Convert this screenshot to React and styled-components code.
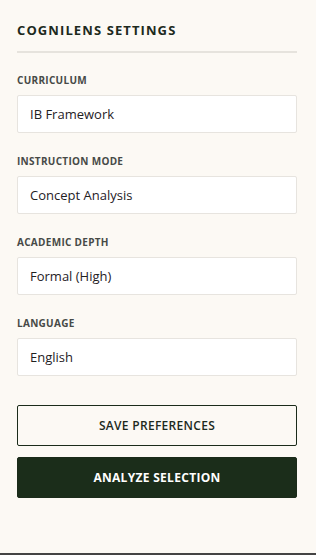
import React from 'react';
import styled, { createGlobalStyle } from 'styled-components';

const GlobalStyle = createGlobalStyle`
  html, body {
    margin: 0;
    padding: 0;
    background: #fcf9f4;
  }
  * {
    box-sizing: border-box;
  }
`;

const Panel = styled.div`
  min-height: 100vh;
  padding: 21px 19px 0 17px;
  background: #fcf9f4;
  font-family: "Open Sans", "Noto Sans", sans-serif;
  border-bottom: 2px solid #444444;
`;

const Title = styled.h2`
  margin: 0;
  padding-bottom: 12px;
  border-bottom: 2px solid #e6e3dd;
  font-size: 13px;
  line-height: 18px;
  font-weight: 700;
  letter-spacing: 1.1px;
  color: #1d2a1d;
`;

const Fields = styled.div`
  display: flex;
  flex-direction: column;
  gap: 21px;
  margin-top: 20px;
`;

const Group = styled.div`
  display: flex;
  flex-direction: column;
  gap: 8px;
`;

const Label = styled.label`
  font-size: 10px;
  line-height: 14px;
  font-weight: 700;
  letter-spacing: 0.3px;
  color: #474a47;
  text-transform: uppercase;
`;

const Field = styled.select`
  appearance: none;
  -webkit-appearance: none;
  width: 100%;
  height: 38px;
  padding: 0 12px;
  border: 1px solid #e7e4df;
  border-radius: 2px;
  background: #ffffff;
  font-family: inherit;
  font-size: 13px;
  color: #1f211f;
  outline: none;
`;

const Actions = styled.div`
  display: flex;
  flex-direction: column;
  gap: 11px;
  margin-top: 29px;
`;

const Button = styled.button`
  width: 100%;
  height: 41px;
  border-radius: 2px;
  font-family: inherit;
  font-size: 12px;
  font-weight: ${p => (p.$primary ? 700 : 600)};
  letter-spacing: 0.3px;
  cursor: pointer;
  border: 1px solid #1b2b1a;
  background: ${p => (p.$primary ? '#1b2d1a' : 'transparent')};
  color: ${p => (p.$primary ? '#ffffff' : '#1d2a1d')};
`;

const settings = [
  { label: 'Curriculum', value: 'IB Framework' },
  { label: 'Instruction Mode', value: 'Concept Analysis' },
  { label: 'Academic Depth', value: 'Formal (High)' },
  { label: 'Language', value: 'English' },
];

export default function App() {
  return (
    <>
      <GlobalStyle />
      <Panel>
        <Title>COGNILENS SETTINGS</Title>
        <Fields>
          {settings.map(s => (
            <Group key={s.label}>
              <Label>{s.label}</Label>
              <Field defaultValue={s.value}>
                <option>{s.value}</option>
              </Field>
            </Group>
          ))}
        </Fields>
        <Actions>
          <Button>SAVE PREFERENCES</Button>
          <Button $primary>ANALYZE SELECTION</Button>
        </Actions>
      </Panel>
    </>
  );
}
